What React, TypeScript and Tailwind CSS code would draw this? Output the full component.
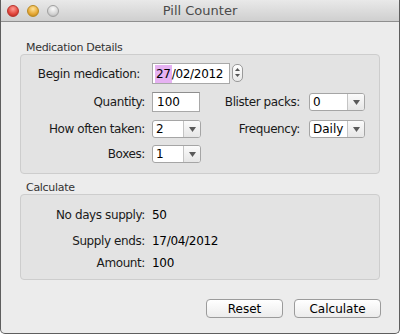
import React from "react";

const font = { fontFamily: '"Lucida Grande", "DejaVu Sans", sans-serif' };

function Field({ value, width }: { value: string; width: string }) {
  return (
    <div className={`${width} h-full bg-white border border-[#a8a8a8] border-t-[#8e8e8e] flex items-center pl-[4px] text-[12px] text-black`}>
      {value}
    </div>
  );
}

function Popup({ value, width }: { value: string; width: string }) {
  return (
    <div className={`${width} h-full flex bg-white border border-[#a5a5a5] rounded-[3px] overflow-hidden text-[12px] text-black`}>
      <div className="flex-1 flex items-center pl-[3px]">{value}</div>
      <div className="w-[17px] border-l border-[#c4c4c4] bg-gradient-to-b from-[#fbfbfb] to-[#e6e6e6] flex items-center justify-center">
        <svg width="7" height="5" viewBox="0 0 7 5">
          <path d="M0 0 H7 L3.5 5 Z" fill="#5a5a5a" />
        </svg>
      </div>
    </div>
  );
}

function Label({ children, width }: { children: React.ReactNode; width: string }) {
  return <div className={`${width} text-right text-[12px] tracking-[-0.4px] text-[#1a1a1a] shrink-0`}>{children}</div>;
}

export default function App() {
  return (
    <div className="w-[400px] h-[335px] bg-white" style={font}>
      <div className="w-[400px] h-[334px] flex flex-col bg-[#ececec] border border-t-0 border-[#5e5e5e] rounded-b-[5px] overflow-hidden">
        <div className="h-[22px] shrink-0 relative flex items-center justify-center bg-gradient-to-b from-[#e9e9e9] to-[#cfcfcf] border-b border-[#8f8f8f] rounded-t-[4px]">
          <div className="absolute left-[6px] top-[5px] flex gap-[8px]">
            <span className="w-[12px] h-[12px] rounded-full bg-[radial-gradient(circle_at_50%_30%,#ff9c93,#e0443b_60%,#a8241c)] border border-[#b8322b]" />
            <span className="w-[12px] h-[12px] rounded-full bg-[radial-gradient(circle_at_50%_30%,#ffe39a,#e5a734_60%,#b37d14)] border border-[#b98a22]" />
            <span className="w-[12px] h-[12px] rounded-full bg-[radial-gradient(circle_at_50%_30%,#fafafa,#d3d3d3_60%,#a8a8a8)] border border-[#a0a0a0]" />
          </div>
          <span className="text-[13px] text-[#4a4a4a]">Pill Counter</span>
        </div>

        <div className="flex-1 flex flex-col px-[19px]">
          <div className="mt-[19px] ml-[6px] text-[11px] tracking-[-0.3px] text-[#333] leading-[13px]">Medication Details</div>
          <div className="h-[120px] bg-[#e3e3e3] border border-[#cdcdcd] rounded-[4px] flex flex-col">
            <div className="mt-[8px] h-[21px] flex items-center">
              <Label width="w-[119px]">Begin medication:</Label>
              <div className="ml-[12px] h-full w-[78px] bg-white border border-[#a8a8a8] flex items-center pl-[2px] text-[12px] tracking-[-0.3px] text-black">
                <span className="bg-[#e6b2f2] px-[1px]">27</span>/02/2012
              </div>
              <div className="ml-[2px] w-[11px] h-[18px] mb-[2px] rounded-[5px] border border-[#9a9a9a] bg-gradient-to-b from-white to-[#e8e8e8] flex flex-col items-center justify-center gap-[3px]">
                <svg width="5" height="3" viewBox="0 0 5 3"><path d="M0 3 L2.5 0 L5 3 Z" fill="#555" /></svg>
                <svg width="5" height="3" viewBox="0 0 5 3"><path d="M0 0 H5 L2.5 3 Z" fill="#555" /></svg>
              </div>
            </div>
            <div className="mt-[8px] h-[20px] flex items-center">
              <Label width="w-[124px]">Quantity:</Label>
              <div className="ml-[7px] h-full"><Field value="100" width="w-[48px]" /></div>
              <Label width="w-[100px]">Blister packs:</Label>
              <div className="ml-[9px] h-[18px]"><Popup value="0" width="w-[56px]" /></div>
            </div>
            <div className="mt-[8px] h-[18px] flex items-center">
              <Label width="w-[124px]">How often taken:</Label>
              <div className="ml-[7px] h-full"><Popup value="2" width="w-[49px]" /></div>
              <Label width="w-[99px]">Frequency:</Label>
              <div className="ml-[9px] h-full"><Popup value="Daily" width="w-[56px]" /></div>
            </div>
            <div className="mt-[7px] h-[18px] flex items-center">
              <Label width="w-[124px]">Boxes:</Label>
              <div className="ml-[7px] h-full"><Popup value="1" width="w-[49px]" /></div>
            </div>
          </div>

          <div className="mt-[7px] ml-[6px] text-[11px] tracking-[-0.3px] text-[#333] leading-[13px]">Calculate</div>
          <div className="h-[86px] bg-[#e3e3e3] border border-[#cdcdcd] rounded-[4px] flex flex-col">
            <div className="mt-[12px] h-[16px] flex items-center">
              <Label width="w-[124px]">No days supply:</Label>
              <span className="ml-[7px] text-[12px] tracking-[-0.3px] text-black">50</span>
            </div>
            <div className="mt-[10px] h-[16px] flex items-center">
              <Label width="w-[124px]">Supply ends:</Label>
              <span className="ml-[7px] text-[12px] tracking-[-0.3px] text-black">17/04/2012</span>
            </div>
            <div className="mt-[6px] h-[16px] flex items-center">
              <Label width="w-[124px]">Amount:</Label>
              <span className="ml-[7px] text-[12px] tracking-[-0.3px] text-black">100</span>
            </div>
          </div>

          <div className="mt-[19px] flex justify-end gap-[11px] mr-[-1px]">
            <button className="w-[77px] h-[19px] rounded-[4px] border border-[#9b9b9b] bg-gradient-to-b from-white to-[#ececec] text-[12px] text-black leading-none">Reset</button>
            <button className="w-[87px] h-[19px] rounded-[4px] border border-[#9b9b9b] bg-gradient-to-b from-white to-[#ececec] text-[12px] text-black leading-none">Calculate</button>
          </div>
        </div>
      </div>
    </div>
  );
}
